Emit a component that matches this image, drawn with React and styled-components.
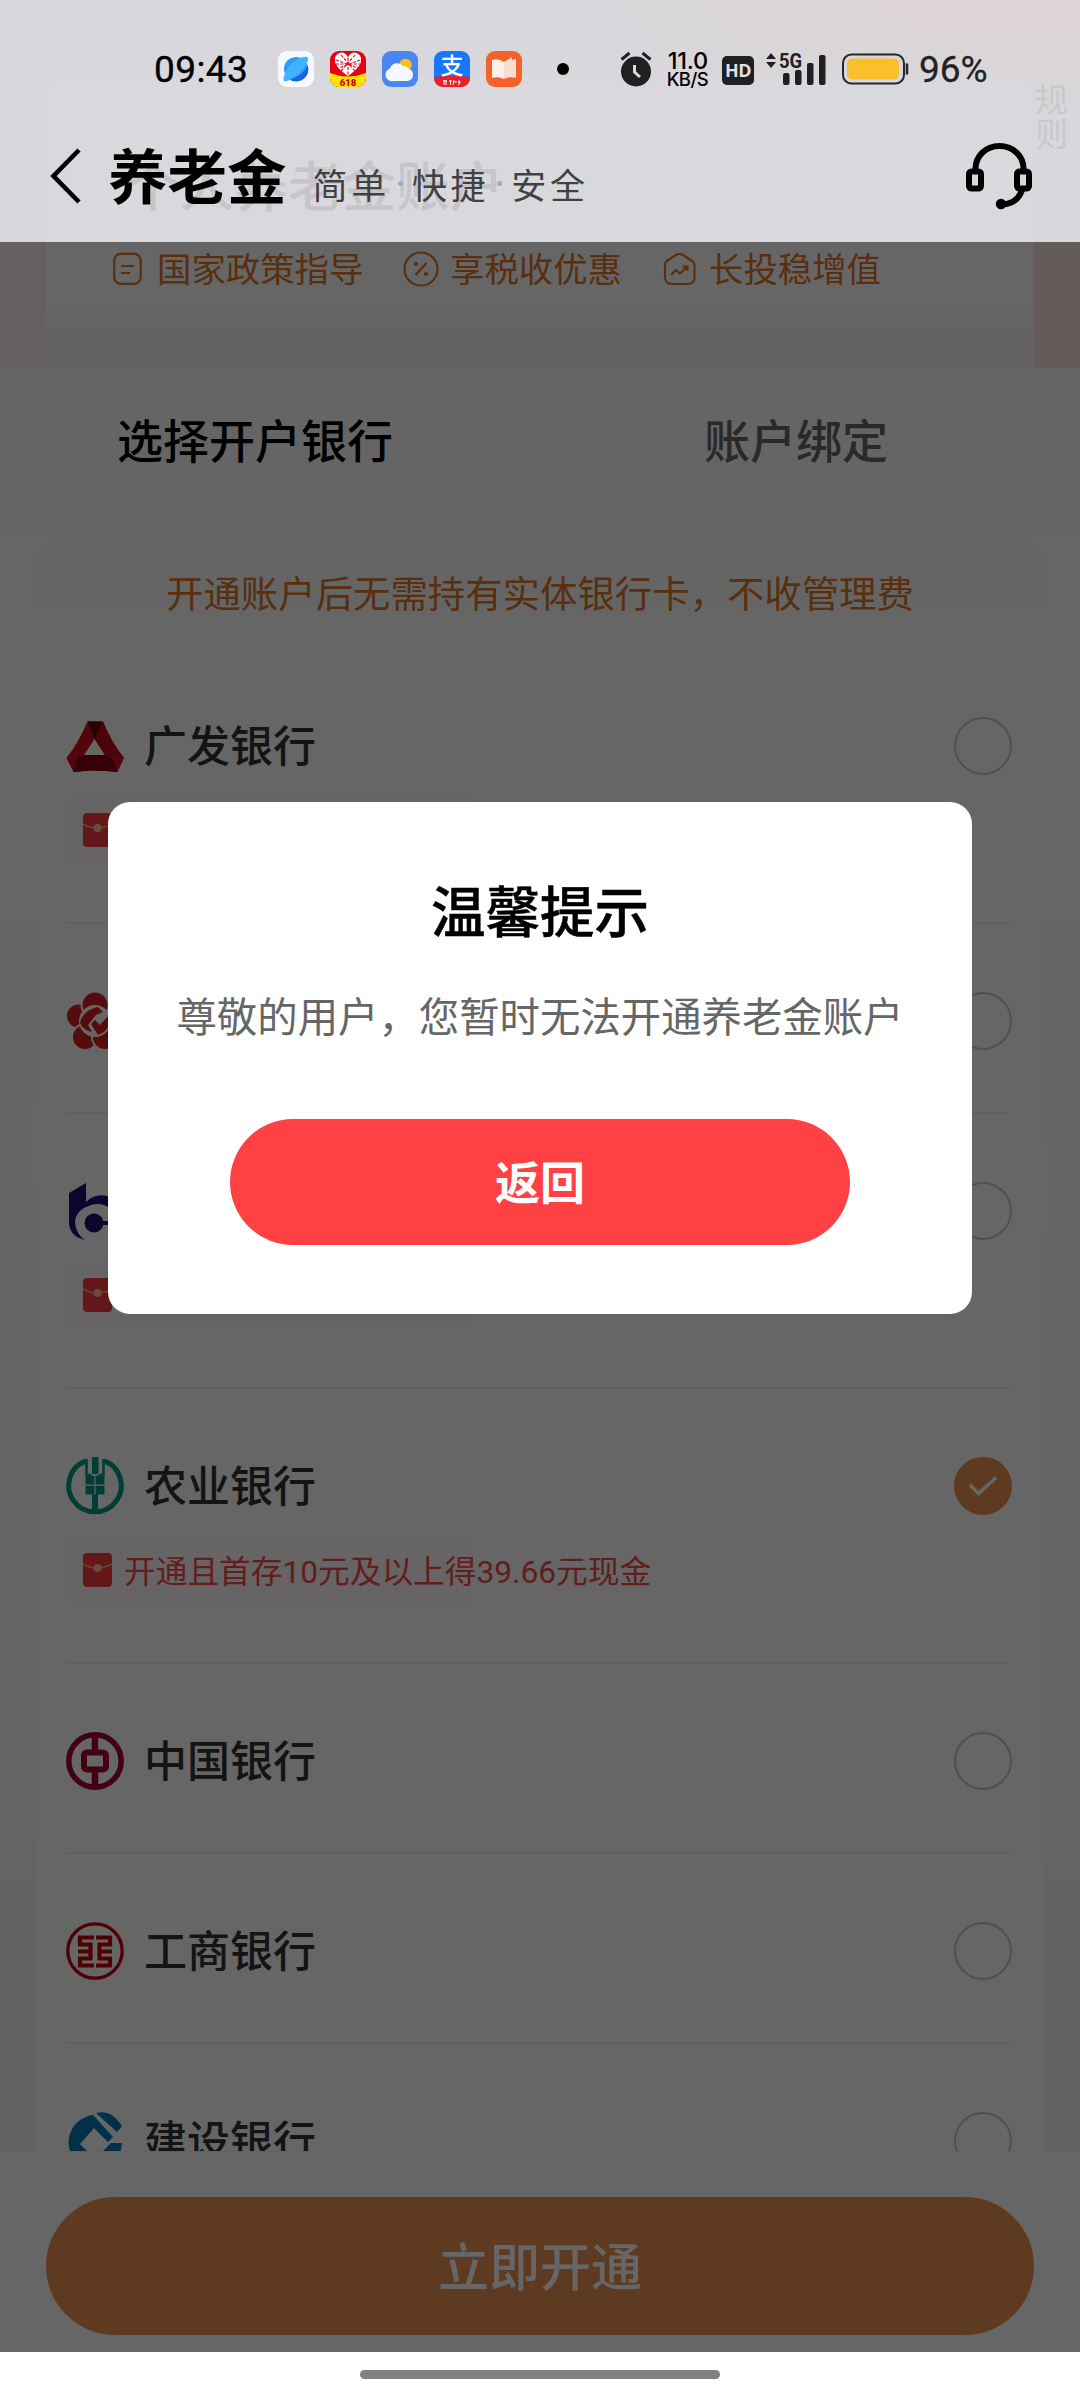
import { useState } from "react";
import styled, { createGlobalStyle, css } from "styled-components";

const cjk = `"Noto Sans CJK SC", sans-serif`;

const theme = {
   brand: "#eb9150",
   brandText: "#dc7526",
   red: "#ff4144",
   ink: "#333",
   line: "#f1f1f1",
};

const GlobalStyle = createGlobalStyle`
   * {
      box-sizing: border-box;
   }
   body {
      margin: 0;
      background: #fff;
      font-family: Roboto, ${cjk};
   }
   button {
      border: none;
      padding: 0;
      font-family: inherit;
      cursor: pointer;
   }
   svg {
      display: block;
      flex-shrink: 0;
      overflow: visible;
   }
`;

const Screen = styled.div`
   display: flex;
   flex-direction: column;
   width: 1080px;
   height: 2400px;
   overflow: hidden;
`;

/* header */

const Header = styled.header`
   position: relative;
   height: 242px;
   flex-shrink: 0;
   overflow: hidden;
   background: radial-gradient(
         ellipse 460px 130px at 1000px 0,
         #ddd4d4,
         rgba(221, 212, 212, 0)
      ),
      #d8d7dc;
`;

const GhostCard = styled.div`
   position: absolute;
   left: 46px;
   top: 75px;
   width: 988px;
   height: 200px;
   border-radius: 24px;
   background: #d9d9dd;
`;

const GhostTitle = styled.div`
   position: absolute;
   left: 126px;
   top: 149px;
   font-size: 54px;
   line-height: 80px;
   font-weight: 500;
   color: #c6c6ca;
   white-space: nowrap;
`;

const GhostRules = styled.div`
   position: absolute;
   left: 1035px;
   top: 84px;
   width: 34px;
   font-size: 33px;
   line-height: 34px;
   color: #c8c7ca;
`;

const StatusBar = styled.div`
   position: relative;
   display: flex;
   align-items: center;
   height: 138px;
   padding-left: 154px;
`;

const Clock = styled.span`
   width: 124px;
   font-size: 37px;
   letter-spacing: 0.4px;
   color: #000;
   -webkit-text-stroke: 0.4px #000;
`;

const AppIcons = styled.div`
   display: flex;
   gap: 16px;
   width: 279px;
`;

const Dot = styled.i`
   width: 12px;
   height: 12px;
   margin-right: 51px;
   border-radius: 50%;
   background: #000;
`;

const NetSpeed = styled.div`
   display: flex;
   flex-direction: column;
   align-items: flex-end;
   width: 56px;
   font-family: Inter, sans-serif;
   font-weight: 500;
   font-size: 23.5px;
   line-height: 19px;
   letter-spacing: -0.2px;
   color: #000;

   small {
      font-size: 18.5px;
      line-height: 18px;
      letter-spacing: -0.6px;
   }
`;

const HdBadge = styled.span`
   display: flex;
   align-items: center;
   justify-content: center;
   width: 32px;
   height: 29px;
   margin: 2px 0 0 14px;
   border-radius: 5px;
   background: #202022;
   color: #e0dfe3;
   font-family: "Open Sans", sans-serif;
   font-weight: 700;
   font-size: 18px;
   letter-spacing: -0.5px;
`;

const Percent = styled.span`
   margin-left: 9px;
   font-size: 37px;
   color: #222;
   -webkit-text-stroke: 0.3px #222;
`;

const NavBar = styled.div`
   position: relative;
   display: flex;
   align-items: center;
   height: 76px;
   padding: 0 47px 0 50px;
`;

const NavTitle = styled.h1`
   margin: 5px 0 0 25px;
   font-size: 59.5px;
   line-height: 76px;
   font-weight: 700;
   color: #000;
`;

const NavSlogan = styled.p`
   display: flex;
   align-items: center;
   flex: 1;
   margin: 15px 0 0 26px;
   font-size: 35px;
   letter-spacing: 3.7px;
   color: #414144;

   i {
      width: 5px;
      height: 5px;
      margin: 0 9px 0 8px;
      border-radius: 50%;
      background: #a9a9ad;
   }
`;

/* page body */

const Body = styled.main`
   position: relative;
   display: flex;
   flex-direction: column;
   height: 2110px;
   flex-shrink: 0;
   overflow: hidden;
   background: #fff;
`;

const Hero = styled.section`
   height: 126px;
   flex-shrink: 0;
   padding: 0 46px;
   background: linear-gradient(90deg, #fbefef 0, #fbeeef 46px, #fae6e1 1034px);
`;

const HeroCard = styled.div`
   display: flex;
   height: 126px;
   padding: 7px 0 0 67px;
   background: linear-gradient(#fff 50px, #faf8f8 92px, #f9f1f2);
`;

const Feature = styled.div`
   display: flex;
   align-items: center;
   height: 40px;
   width: ${(props) => props.$width}px;
   gap: ${(props) => props.$gap}px;
   font-size: 34.4px;
   color: ${theme.brandText};
   white-space: nowrap;

   span {
      margin-top: -4px;
   }
`;

const Tabs = styled.nav`
   display: flex;
   height: 172px;
   flex-shrink: 0;
   background: #fdfdfd;
`;

const Tab = styled.button`
   width: 510px;
   height: 140px;
   background: none;
   font-size: 46px;
   font-weight: 500;
   color: #666;

   ${(props) =>
      props.$active &&
      css`
         color: #000;
      `}
   &:last-child {
      width: 550px;
      padding-right: 18px;
   }
`;

const TabEdge = styled.svg`
   margin: 0 -100px 0 0;
`;

const Panel = styled.section`
   display: flex;
   flex-direction: column;
   flex: 1;
   min-height: 0;
   overflow: hidden;
   padding: 0 35px;
   background: linear-gradient(#fff 380px, #fcfcfc 381px, #fafafa 1100px, #f7f7f7);
`;

const Notice = styled.div`
   height: 109px;
   flex-shrink: 0;
   border-radius: 24px 24px 0 0;
   background: linear-gradient(#fcf9f6, #fefefe 80px, #fff);
   text-align: center;
   font-size: 37.4px;
   line-height: 111px;
   color: ${theme.brandText};
`;

const BankList = styled.ul`
   margin: 0;
   padding: 0 34px 0 31px;
   list-style: none;
   background: #fff;
`;

const BankItem = styled.li`
   height: ${(props) => (props.$tall ? 275 : 190)}px;
   border-bottom: 2px solid ${theme.line};
`;

const BankRow = styled.div`
   display: flex;
   align-items: center;
   height: 193px;
`;

const BankName = styled.span`
   flex: 1;
   padding: 0 0 6px 20px;
   font-size: 43px;
   font-weight: 500;
   color: ${theme.ink};
`;

const Radio = styled.button`
   display: flex;
   align-items: center;
   justify-content: center;
   width: 58px;
   height: 58px;
   margin-right: -1px;
   border: 2px solid #c9c9c9;
   border-radius: 50%;
   background: none;

   ${(props) =>
      props.$checked &&
      css`
         border-color: ${theme.brand};
         background: ${theme.brand};
      `}
`;

const Promo = styled.div`
   display: flex;
   align-items: center;
   width: 402px;
   height: 72px;
   margin: -48px 0 0 4px;
   padding-left: 13px;
   gap: 11px;
   background: #fffafa;
   font-size: 31.7px;
   color: #f44a4a;
   white-space: nowrap;

   span {
      margin-top: -3px;
   }
`;

const Footer = styled.footer`
   height: 201px;
   flex-shrink: 0;
   padding: 45px 46px 0;
   border-top: 1px solid #f2f2f2;
   background: #fff;
`;

const OpenButton = styled.button`
   width: 988px;
   height: 138px;
   padding-bottom: 4px;
   border-radius: 69px;
   background: ${theme.brand};
   font-size: 51px;
   font-weight: 500;
   color: #fff;
`;

/* dialog */

const Mask = styled.div`
   position: absolute;
   inset: 0;
   display: flex;
   flex-direction: column;
   align-items: center;
   padding-top: 560px;
   background: rgba(0, 0, 0, 0.6);
`;

const Dialog = styled.div`
   display: flex;
   flex-direction: column;
   align-items: center;
   width: 864px;
   height: 512px;
   padding-top: 71px;
   border-radius: 22px;
   background: #fff;
`;

const DialogTitle = styled.h2`
   margin: 0;
   font-size: 54.5px;
   line-height: 80px;
   font-weight: 500;
   color: #000;
   -webkit-text-stroke: 0.5px #000;
`;

const DialogText = styled.p`
   margin: 36px 0 0;
   font-size: 40.4px;
   line-height: 60px;
   color: #666;
`;

const DialogButton = styled.button`
   width: 620px;
   height: 126px;
   margin-top: 70px;
   padding-bottom: 4px;
   border-radius: 63px;
   background: ${theme.red};
   font-size: 45px;
   font-weight: 700;
   color: #fff;
`;

const GestureBar = styled.div`
   display: flex;
   justify-content: center;
   height: 48px;
   padding-top: 18px;
   background: #fff;

   i {
      width: 360px;
      height: 9px;
      border-radius: 5px;
      background: #808080;
   }
`;

/* status bar icons */

const AppBase = ({ fill, children }) => (
   <svg width="36" height="36" viewBox="0 0 36 36">
      <rect width="36" height="36" rx="9" fill={fill} />
      {children}
   </svg>
);

const BrowserApp = () => (
   <AppBase fill="#f6f9fd">
      <circle cx="18" cy="18" r="12" fill="#2a9df8" />
      <path d="M29.500 14A12 12 0 0 1 11 28C20 27 27 21 29.500 14z" fill="#1765e0" />
      <path
         d="M6 30C4 27 9 15 17 10C24 5 29 5 30 7C31 10 26 18 19 24C13 29 8 31 6 30z"
         fill="#41b2fb"
      />
   </AppBase>
);

const ShoppingApp = () => (
   <AppBase fill="#e60012">
      <path d="M0 22Q18 29 36 22V27A9 9 0 0 1 27 36H9A9 9 0 0 1 0 27z" fill="#ffe100" />
      <path
         d="M18 25C8 18 5 13 5 9.500A6 6 0 0 1 18 7A6 6 0 0 1 31 9.500C31 13 28 18 18 25z"
         fill="#fff"
      />
      <path
         d="M18 7V24M6 9L28 17M30 9L9 17M11 4L25 20M25 4L11 20M6 13H30"
         stroke="#e60012"
         strokeWidth="1.100"
         strokeDasharray="3 1.500"
      />
      <text
         x="18"
         y="34.500"
         textAnchor="middle"
         fontSize="9.500"
         fontWeight="900"
         fontFamily="Roboto"
         fill="#c80010"
      >
         618
      </text>
   </AppBase>
);

const WeatherApp = () => (
   <AppBase fill="#4886f0">
      <circle cx="23.500" cy="14" r="6.200" fill="#ffbd20" />
      <path
         d="M12 30A6.500 6.500 0 0 1 8 17.500A7.500 7.500 0 0 1 21 15A7 7 0 0 1 27 18A6.200 6.200 0 0 1 25 30z"
         fill="#f5f9ff"
      />
   </AppBase>
);

const PayApp = () => (
   <AppBase fill="#1677ff">
      <path d="M0 26Q18 24 36 26V27A9 9 0 0 1 27 36H9A9 9 0 0 1 0 27z" fill="#ee1c24" />
      <text
         x="18"
         y="22.500"
         textAnchor="middle"
         fontSize="23"
         fontWeight="500"
         fontFamily="Noto Sans CJK SC"
         fill="#fff"
      >
         支
      </text>
      <path d="M10 29V34M9 30H13M12 29V34M15 30H18M16.500 29V34M20 29L19 34M20 31H23M25 29V34M24 31H27" stroke="#fff" />
   </AppBase>
);

const ReaderApp = () => (
   <AppBase fill="#f4622c">
      <path d="M6 9Q12 7 18 11V28Q12 25 6 27z" fill="#fdf1e9" />
      <path d="M18 11L26 6V9L30 8V27Q24 25 18 28z" fill="#f8dfcf" />
   </AppBase>
);

const Alarm = () => (
   <svg width="32" height="36" viewBox="0 0 32 36">
      <circle cx="16" cy="20.500" r="15" fill="#202022" />
      <path d="M1.500 8.500L9.500 2M30.500 8.500L22.500 2" stroke="#202022" strokeWidth="3" />
      <path d="M14.500 14V21L20 26" fill="none" stroke="#d8d7dc" strokeWidth="3" />
   </svg>
);

const SignalIcon = styled.svg`
   margin-left: 11px;
`;

const Signal = () => (
   <SignalIcon width="62" height="34" viewBox="0 0 62 34">
      <path d="M1 7L6 1L11 7zM1 10L6 16L11 10z" fill="#202022" />
      <text
         x="14"
         y="15.500"
         fontSize="19.500"
         fontWeight="700"
         fontFamily="Roboto"
         fill="#202022"
         textLength="23"
         lengthAdjust="spacingAndGlyphs"
      >
         5G
      </text>
      <rect x="18" y="21" width="6.500" height="12" rx="2" fill="#202022" />
      <rect x="30" y="18" width="6.500" height="15" rx="2" fill="#202022" />
      <rect x="42" y="11" width="6.500" height="22" rx="2" fill="#202022" />
      <rect x="54" y="3" width="6.500" height="30" rx="2" fill="#202022" />
   </SignalIcon>
);

const BatteryIcon = styled.svg`
   margin-left: 15px;
`;

const Battery = () => (
   <BatteryIcon width="68" height="32" viewBox="0 0 68 32">
      <rect x="1" y="1.500" width="61" height="29" rx="8.500" fill="none" stroke="#27272d" strokeWidth="2" />
      <rect x="5" y="5.500" width="52" height="21" rx="5" fill="#fabf2d" />
      <path d="M65 11.500V20.500" stroke="#27272d" strokeWidth="2.500" strokeLinecap="round" />
   </BatteryIcon>
);

const Back = () => (
   <svg width="33" height="56" viewBox="0 0 33 56">
      <path d="M29 2L3.500 28L29 54" fill="none" stroke="#000" strokeWidth="4.600" />
   </svg>
);

const Headset = () => (
   <svg width="67" height="68" viewBox="0 0 67 68" fill="none" stroke="#000">
      <path d="M9.500 28C9 14 20 4 33.500 4S58 14 57.500 28" strokeWidth="6" />
      <rect x="3" y="29.500" width="12" height="17" rx="2.500" strokeWidth="6" />
      <rect x="51" y="29.500" width="12" height="17" rx="2.500" strokeWidth="6" />
      <path d="M56 48C53 57 47 62 36 62.500" strokeWidth="6" />
      <circle cx="35" cy="62" r="5.200" fill="#000" stroke="none" />
   </svg>
);

/* feature icons */

const iconProps = {
   fill: "none",
   stroke: theme.brandText,
   strokeWidth: 2.2,
};

const DocIcon = () => (
   <svg width="30" height="34" viewBox="0 0 30 34" {...iconProps}>
      <rect x="1.200" y="1.800" width="26.500" height="30" rx="6.500" />
      <path d="M8 14H21M8 21H17" />
   </svg>
);

const PercentIcon = () => (
   <svg width="36" height="36" viewBox="0 0 36 36" {...iconProps}>
      <circle cx="18" cy="18" r="16.500" />
      <path d="M12.500 24L23.500 12" />
      <circle cx="13" cy="13" r="1" />
      <circle cx="23" cy="23" r="1" />
   </svg>
);

const GrowthIcon = () => (
   <svg width="34" height="34" viewBox="0 0 34 34" {...iconProps}>
      <path d="M2 13Q2 10 4.500 8.500L13 3Q16.500 1 20 3L28.500 8.500Q31.500 10.500 31.500 13.500V25Q31.500 32 25 32H9Q2 32 2 25z" />
      <path d="M8 23L13 18L17 21.500L24 15M19.500 14.500H24.500V19" />
   </svg>
);

const RedPacket = () => (
   <svg width="30" height="34" viewBox="0 0 30 34">
      <rect width="29" height="34" rx="4" fill="#fa3a40" />
      <path d="M0 11Q14 19 29 11" fill="none" stroke="#ffab8a" strokeWidth="1.500" />
      <circle cx="14.500" cy="15" r="4" fill="#ffc494" />
   </svg>
);

/* bank logos */

const Logo = ({ children }) => (
   <svg width="58" height="58" viewBox="0 0 58 58">
      {children}
   </svg>
);

const GuangfaLogo = () => (
   <Logo>
      <path d="M21.500 4.500H37Q45 25 58 41L51.500 55Q29 52 7.500 55L.5 41Q13 25 21.500 4.500zM28.500 22L18 38H39z" fill="#cc0e20" fillRule="evenodd" />
      <path d="M21.500 4.500H37L28.500 22z" fill="#66000c" />
      <path d="M37 4.500Q45 25 58 41L39 38L28.500 22z" fill="#b90c1c" />
      <path d="M12 40L18 38H39L46 41L51.500 55Q29 52 7.500 55z" fill="#850010" />
   </Logo>
);

const FlowerLogo = () => (
   <Logo>
      <g fill="#d81e1e" stroke="#fff" strokeWidth="2">
         <circle cx="12.500" cy="24" r="12.500" />
         <circle cx="45.500" cy="24" r="12.500" />
         <circle cx="19" cy="45" r="13" />
         <circle cx="39" cy="45" r="13" />
         <circle cx="29" cy="13" r="13.500" />
      </g>
      <circle cx="29" cy="29" r="16" fill="#fff" />
      <path d="M14 31Q17 18 32 15L37 20L30 23L22 33L26 40Q18 39 14 31z" fill="#d81e1e" />
      <path d="M25 32L29 28L34 33L43 23Q46 33 38 40L32 43z" fill="#d81e1e" />
   </Logo>
);

const JiaotongLogo = () => (
   <Logo>
      <path
         d="M3 11L20 1V20Q30 10 45 15Q54 19 57 27H45Q36 20 25 23Q9 28 9 41Q10 52 19 58Q3 54 3 40z"
         fill="#1c1070"
      />
      <circle cx="28" cy="41" r="9.500" fill="#1c1070" />
      <path d="M30 39H57V43H30z" fill="#1c1070" />
   </Logo>
);

const NongyeLogo = () => (
   <Logo>
      <path
         d="M20 3.800A26.300 26.300 0 1 0 38 3.800"
         fill="none"
         stroke="#009882"
         strokeWidth="5"
      />
      <path
         d="M20.500 2V18H25M37.500 2V18H33"
         fill="none"
         stroke="#009882"
         strokeWidth="2.500"
      />
      <path
         d="M26 0H32.500V17H26zM19.500 18.500H28.400V27.500H19.500zM29.600 18.500H38.500V27.500H29.600zM19.500 28.700H28.400V37.500H19.500zM29.600 28.700H38.500V37.500H29.600zM26 37.500H32V55H26z"
         fill="#009882"
      />
   </Logo>
);

const ZhongguoLogo = () => (
   <Logo>
      <g fill="none" stroke="#a80036">
         <circle cx="29" cy="29" r="26.200" strokeWidth="5.500" />
         <rect x="18" y="20.500" width="22" height="17" rx="3" strokeWidth="6" />
         <path d="M29 3V18M29 40V55" strokeWidth="6.500" />
      </g>
   </Logo>
);

const GongshangLogo = () => (
   <Logo>
      <g fill="none" stroke="#c40008">
         <circle cx="29" cy="29" r="27.200" strokeWidth="3.300" />
         <path
            d="M28 15.500H14V22.500H24.500V36.500H14V43.500H28M12 29.500H24.500M30 15.500H44V22.500H33.500V36.500H44V43.500H30M46 29.500H33.500"
            strokeWidth="4.200"
         />
      </g>
   </Logo>
);

const JiansheLogo = () => (
   <Logo>
      <path
         d="M27 3A27.500 27.500 0 1 0 54 44L56 31H45L29 47L14 32L28 16L42 30L47 25L27 3z"
         fill="#007ab4"
      />
      <path d="M30 1Q38 -1 44 2Q51 6 56 14L51 20z" fill="#007ab4" />
   </Logo>
);

const banks = [
   { id: "gf", name: "广发银行", logo: <GuangfaLogo />, tall: true },
   { id: "fl", logo: <FlowerLogo /> },
   { id: "jt", logo: <JiaotongLogo />, tall: true },
   {
      id: "ny",
      name: "农业银行",
      logo: <NongyeLogo />,
      tall: true,
      promo: "开通且首存10元及以上得39.66元现金",
   },
   { id: "zg", name: "中国银行", logo: <ZhongguoLogo /> },
   { id: "gs", name: "工商银行", logo: <GongshangLogo /> },
   { id: "js", name: "建设银行", logo: <JiansheLogo /> },
];

const TopBar = () => (
   <Header>
      <GhostCard />
      <GhostTitle>个人养老金账户</GhostTitle>
      <GhostRules>规则</GhostRules>
      <StatusBar>
         <Clock>09:43</Clock>
         <AppIcons>
            <BrowserApp />
            <ShoppingApp />
            <WeatherApp />
            <PayApp />
            <ReaderApp />
         </AppIcons>
         <Dot />
         <Alarm />
         <NetSpeed>
            11.0<small>KB/S</small>
         </NetSpeed>
         <HdBadge>HD</HdBadge>
         <Signal />
         <Battery />
         <Percent>96%</Percent>
      </StatusBar>
      <NavBar>
         <Back />
         <NavTitle>养老金</NavTitle>
         <NavSlogan>
            简单
            <i />
            快捷
            <i />
            安全
         </NavSlogan>
         <Headset />
      </NavBar>
   </Header>
);

const App = () => {
   const [selected, setSelected] = useState("ny");
   const [isOpen, setIsOpen] = useState(true);
   return (
      <Screen>
         <GlobalStyle />
         <TopBar />
         <Body>
            <Hero>
               <HeroCard>
                  <Feature $width={290} $gap={14}>
                     <DocIcon /> <span>国家政策指导</span>
                  </Feature>
                  <Feature $width={260} $gap={11}>
                     <PercentIcon /> <span>享税收优惠</span>
                  </Feature>
                  <Feature $width={220} $gap={12}>
                     <GrowthIcon /> <span>长投稳增值</span>
                  </Feature>
               </HeroCard>
            </Hero>
            <Tabs>
               <Tab $active>选择开户银行</Tab>
               <TabEdge width="120" height="146" viewBox="0 0 120 146">
                  <path d="M0 0Q14 8 20 35L36 105Q45 140 75 146Q45 125 38 90L24 30Q18 5 0 0z" fill="#f9f9f9" />
               </TabEdge>
               <Tab>账户绑定</Tab>
            </Tabs>
            <Panel>
               <Notice>开通账户后无需持有实体银行卡，不收管理费</Notice>
               <BankList>
                  {banks.map((bank) => (
                     <BankItem key={bank.id} $tall={bank.tall}>
                        <BankRow>
                           {bank.logo}
                           <BankName>{bank.name}</BankName>
                           <Radio
                              $checked={selected === bank.id}
                              onClick={() => setSelected(bank.id)}
                           >
                              {selected === bank.id && (
                                 <svg width="30" height="22" viewBox="0 0 30 22">
                                    <path d="M2 10L10.500 18.500L28 2.500" fill="none" stroke="#fff" strokeWidth="3.600" />
                                 </svg>
                              )}
                           </Radio>
                        </BankRow>
                        {bank.tall && (
                           <Promo>
                              <RedPacket />
                              <span>{bank.promo}</span>
                           </Promo>
                        )}
                     </BankItem>
                  ))}
               </BankList>
            </Panel>
            <Footer>
               <OpenButton>立即开通</OpenButton>
            </Footer>
            {isOpen && (
               <Mask>
                  <Dialog>
                     <DialogTitle>温馨提示</DialogTitle>
                     <DialogText>尊敬的用户，您暂时无法开通养老金账户</DialogText>
                     <DialogButton onClick={() => setIsOpen(false)}>返回</DialogButton>
                  </Dialog>
               </Mask>
            )}
         </Body>
         <GestureBar>
            <i />
         </GestureBar>
      </Screen>
   );
};

export default App;
